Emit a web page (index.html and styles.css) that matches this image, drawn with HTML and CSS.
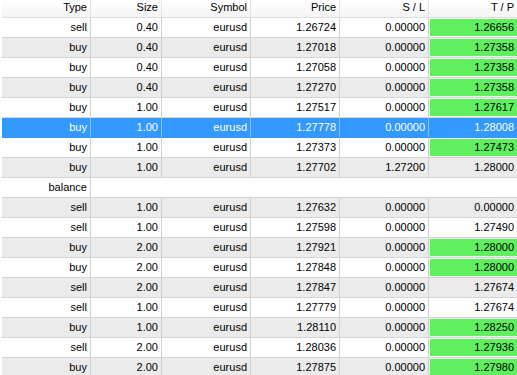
FILE: index.html
```html
<!DOCTYPE html>
<html>
<head>
<meta charset="utf-8">
<link rel="stylesheet" href="styles.css">
</head>
<body>
<div class="grid">
  <div class="row head">
    <div class="c">Type</div><div class="c">Size</div><div class="c">Symbol</div><div class="c">Price</div><div class="c">S / L</div><div class="c">T / P</div>
  </div>
  <div class="row"><div class="c">sell</div><div class="c">0.40</div><div class="c">eurusd</div><div class="c">1.26724</div><div class="c">0.00000</div><div class="c tp"><span class="g">1.26656</span></div></div>
  <div class="row alt"><div class="c">buy</div><div class="c">0.40</div><div class="c">eurusd</div><div class="c">1.27018</div><div class="c">0.00000</div><div class="c tp"><span class="g">1.27358</span></div></div>
  <div class="row"><div class="c">buy</div><div class="c">0.40</div><div class="c">eurusd</div><div class="c">1.27058</div><div class="c">0.00000</div><div class="c tp"><span class="g">1.27358</span></div></div>
  <div class="row alt"><div class="c">buy</div><div class="c">0.40</div><div class="c">eurusd</div><div class="c">1.27270</div><div class="c">0.00000</div><div class="c tp"><span class="g">1.27358</span></div></div>
  <div class="row"><div class="c">buy</div><div class="c">1.00</div><div class="c">eurusd</div><div class="c">1.27517</div><div class="c">0.00000</div><div class="c tp"><span class="g">1.27617</span></div></div>
  <div class="row sel"><div class="c">buy</div><div class="c">1.00</div><div class="c">eurusd</div><div class="c">1.27778</div><div class="c">0.00000</div><div class="c tp"><span class="p">1.28008</span></div></div>
  <div class="row"><div class="c">buy</div><div class="c">1.00</div><div class="c">eurusd</div><div class="c">1.27373</div><div class="c">0.00000</div><div class="c tp"><span class="g">1.27473</span></div></div>
  <div class="row alt"><div class="c">buy</div><div class="c">1.00</div><div class="c">eurusd</div><div class="c">1.27702</div><div class="c">1.27200</div><div class="c tp"><span class="p">1.28000</span></div></div>
  <div class="row bal"><div class="c">balance</div><div class="c rest"></div></div>
  <div class="row alt"><div class="c">sell</div><div class="c">1.00</div><div class="c">eurusd</div><div class="c">1.27632</div><div class="c">0.00000</div><div class="c tp"><span class="p">0.00000</span></div></div>
  <div class="row"><div class="c">sell</div><div class="c">1.00</div><div class="c">eurusd</div><div class="c">1.27598</div><div class="c">0.00000</div><div class="c tp"><span class="p">1.27490</span></div></div>
  <div class="row alt"><div class="c">buy</div><div class="c">2.00</div><div class="c">eurusd</div><div class="c">1.27921</div><div class="c">0.00000</div><div class="c tp"><span class="g">1.28000</span></div></div>
  <div class="row"><div class="c">buy</div><div class="c">2.00</div><div class="c">eurusd</div><div class="c">1.27848</div><div class="c">0.00000</div><div class="c tp"><span class="g">1.28000</span></div></div>
  <div class="row alt"><div class="c">sell</div><div class="c">2.00</div><div class="c">eurusd</div><div class="c">1.27847</div><div class="c">0.00000</div><div class="c tp"><span class="p">1.27674</span></div></div>
  <div class="row"><div class="c">sell</div><div class="c">1.00</div><div class="c">eurusd</div><div class="c">1.27779</div><div class="c">0.00000</div><div class="c tp"><span class="p">1.27674</span></div></div>
  <div class="row alt"><div class="c">buy</div><div class="c">1.00</div><div class="c">eurusd</div><div class="c">1.28110</div><div class="c">0.00000</div><div class="c tp"><span class="g">1.28250</span></div></div>
  <div class="row"><div class="c">sell</div><div class="c">2.00</div><div class="c">eurusd</div><div class="c">1.28036</div><div class="c">0.00000</div><div class="c tp"><span class="g">1.27936</span></div></div>
  <div class="row alt"><div class="c">buy</div><div class="c">2.00</div><div class="c">eurusd</div><div class="c">1.27875</div><div class="c">0.00000</div><div class="c tp"><span class="g">1.27980</span></div></div>
</div>
</body>
</html>
```
FILE: styles.css
```css
html, body {
  margin: 0;
  padding: 0;
  background: #fff;
  overflow: hidden;
}
body {
  font-family: "Liberation Sans", Arial, sans-serif;
  font-size: 11px;
  color: #000;
  width: 517px;
  height: 375px;
}
.grid {
  margin-left: 2px;
  width: 515px;
}
.row {
  display: grid;
  grid-template-columns: 89px 71px 89px 89px 89px 88px;
  height: 20px;
  box-sizing: border-box;
  border-bottom: 1px solid #d6d6d6;
}
.row.alt { background: #ebebeb; }
.c {
  border-right: 1px solid #d0d0d0;
  text-align: right;
  padding-right: 3px;
  line-height: 19px;
  white-space: nowrap;
  overflow: hidden;
}
.c:last-child { border-right: none; }
.row.head {
  height: 18px;
  background: linear-gradient(#ffffff, #f4f4f4);
  border-bottom: 1px solid #dedede;
}
.row.head .c {
  line-height: 15px;
  border-right: 1px solid #e4e4e4;
}
.row.head .c:last-child { border-right: none; }
.row.sel {
  background: #3399ff;
  color: #fff;
  border-bottom-color: #3399ff;
}
.row.sel .c { border-right-color: #8ebfee; }
.row.bal { grid-template-columns: 89px 1fr; }
.c.tp {
  padding: 1px 0 1px 1px;
  line-height: 17px;
}
.c.tp span {
  display: block;
  height: 17px;
  padding-right: 3px;
}
.c.tp .g { background: #5fef5f; }
```
